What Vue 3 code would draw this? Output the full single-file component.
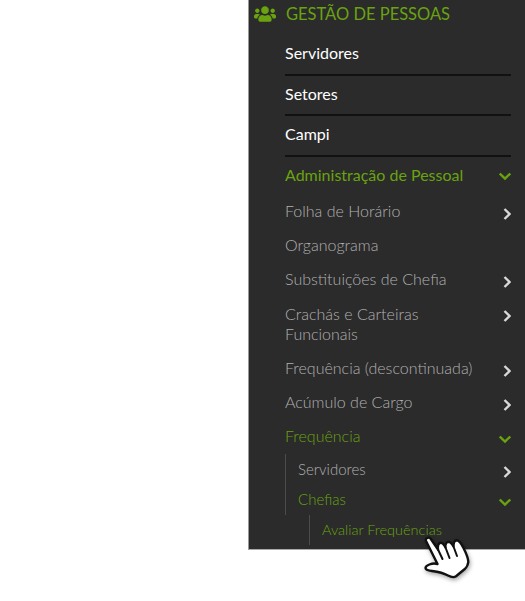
<template>
  <div class="page">
    <nav class="menu">
      <div class="title">
        <svg class="users" viewBox="0 0 640 512"><path d="M96 224c35 0 64-29 64-64s-29-64-64-64-64 29-64 64 29 64 64 64zm448 0c35 0 64-29 64-64s-29-64-64-64-64 29-64 64 29 64 64 64zm32 32h-64c-18 0-33 7-45 19 40 22 69 62 75 109h66c18 0 32-14 32-32v-32c0-35-29-64-64-64zm-256 0c62 0 112-50 112-112S382 32 320 32 208 82 208 144s50 112 112 112zm77 32h-8c-21 10-44 16-69 16s-48-6-69-16h-8c-64 0-115 52-115 115v29c0 27 21 48 48 48h288c27 0 48-21 48-48v-29c0-63-51-115-115-115zm-224-13c-12-12-27-19-45-19H64c-35 0-64 29-64 64v32c0 18 14 32 32 32h66c6-47 35-87 75-109z"/></svg>
        <span>GESTÃO DE PESSOAS</span>
      </div>

      <ul class="top">
        <li v-for="item in topItems" :key="item">{{ item }}</li>
      </ul>

      <div class="row green admin">
        <span>Administração de Pessoal</span>
        <svg class="chev" viewBox="0 0 12 12"><path d="M.8 3.500 6 8.500l5.200-5" /></svg>
      </div>

      <div
        v-for="item in subItems"
        :key="item.label"
        class="row sub"
        :class="{ double: item.double }"
      >
        <span>{{ item.label }}</span>
        <svg v-if="item.arrow" class="chev" viewBox="0 0 12 12"><path d="M5.500 1 10.500 6l-5 5" /></svg>
      </div>

      <div class="row sub green">
        <span>Frequência</span>
        <svg class="chev" viewBox="0 0 12 12"><path d="M.8 3.500 6 8.500l5.200-5" /></svg>
      </div>

      <div class="level2">
        <div class="row two">
          <span>Servidores</span>
          <svg class="chev" viewBox="0 0 12 12"><path d="M5.500 1 10.500 6l-5 5" /></svg>
        </div>
        <div class="row two green">
          <span>Chefias</span>
          <svg class="chev" viewBox="0 0 12 12"><path d="M.8 3.500 6 8.500l5.200-5" /></svg>
        </div>
      </div>
      <div class="level3">
        <span>Avaliar Frequências</span>
      </div>
    </nav>

    <svg class="hand" viewBox="0 0 46 46">
      <path
        d="M2 6C1 3.500 4.500 1.500 6.500 3.500L14 14.500C13.500 10.500 14.500 8 16.500 7.700C18.500 7.500 20 9.500 21.500 12.500C21 9 22.500 7 24.500 6.800C26.500 6.800 28 9 29.500 11.500C29.500 8 30.500 5.500 32.500 5.300C35 5.200 37 8 39.500 13C42 18 44.500 23 44.300 27C44 30 42.500 32.500 40.500 34.300L32 41.300C29.500 43 27.500 42.500 24 40.500C19.500 38 14 36.800 8 36C4 35.500 1.500 35 1.500 33C1.500 30.500 8 27.500 13.500 29Z"
        fill="#fff"
        stroke="#111"
        stroke-width="2.400"
        stroke-linejoin="round"
      />
      <path d="M14 14.500 18.500 24M21.500 12.500 25.500 23M29.500 11.500 33 21" fill="none" stroke="#111" stroke-width="2" stroke-linecap="round" />
    </svg>
  </div>
</template>

<script setup>
const topItems = ['Servidores', 'Setores', 'Campi']

const subItems = [
  { label: 'Folha de Horário', arrow: true },
  { label: 'Organograma', arrow: false },
  { label: 'Substituições de Chefia', arrow: true },
  { label: 'Crachás e Carteiras Funcionais', arrow: true, double: true },
  { label: 'Frequência (descontinuada)', arrow: true },
  { label: 'Acúmulo de Cargo', arrow: true }
]
</script>

<style>
html,
body {
  margin: 0;
  background: #fff;
}
</style>

<style scoped>
.page {
  position: relative;
  width: 525px;
  height: 601px;
  overflow: hidden;
  font-family: Lato, sans-serif;
}

.menu {
  box-sizing: border-box;
  width: 277px;
  height: 550px;
  margin-left: 248px;
  padding-right: 14px;
  background: #2b2b2b;
  border-left: 1px solid #999;
  border-bottom: 1px solid #aaa;
}

.title {
  display: flex;
  align-items: center;
  height: 28px;
  color: #69a310;
  font-size: 16.500px;
}

.users {
  width: 22px;
  height: 18px;
  margin: 0 10px 0 5px;
  fill: #69a310;
}

.top {
  list-style: none;
  margin: 7px 0 0;
  padding: 0 0 0 36px;
}

.top li {
  box-sizing: border-box;
  height: 40.500px;
  padding-top: 7px;
  line-height: 22px;
  border-bottom: 2px solid #111;
  color: #fff;
  font-size: 16px;
  font-weight: 400;
}

.row {
  display: flex;
  justify-content: space-between;
  align-items: center;
  color: #b0b0b0;
  font-size: 16px;
  line-height: 20px;
  font-weight: 300;
}

.row span {
  max-width: 190px;
  margin-bottom: 2px;
}

.green {
  color: #69a310;
}

.admin {
  height: 38px;
  margin-left: 36px;
  font-weight: 400;
}

.admin .chev {
  margin-top: 0;
}

.sub {
  min-height: 34.300px;
  margin-left: 36px;
}

.sub.double {
  box-sizing: border-box;
  align-items: flex-start;
  min-height: 54px;
  padding: 7px 0 5px;
}

.sub.double .chev {
  margin-top: 6px;
}

.chev {
  flex: none;
  width: 12px;
  height: 12px;
  margin-top: 4px;
  fill: none;
  stroke: #d8d8d8;
  stroke-width: 2.400;
}

.green .chev {
  stroke: #69a310;
}

.level2 {
  margin-left: 36px;
  padding-left: 12px;
  border-left: 1px solid #4c4c4c;
}

.two {
  height: 30.500px;
  font-size: 15px;
}

.level3 {
  height: 30px;
  margin-left: 60px;
  padding-left: 12px;
  border-left: 1px solid #4c4c4c;
  color: #69a310;
  font-size: 14.500px;
  font-weight: 300;
  line-height: 30px;
}

.hand {
  position: absolute;
  left: 424px;
  top: 535px;
  width: 46px;
  height: 46px;
  filter: drop-shadow(1px 2px 2px rgba(0, 0, 0, 0.35));
}
</style>
